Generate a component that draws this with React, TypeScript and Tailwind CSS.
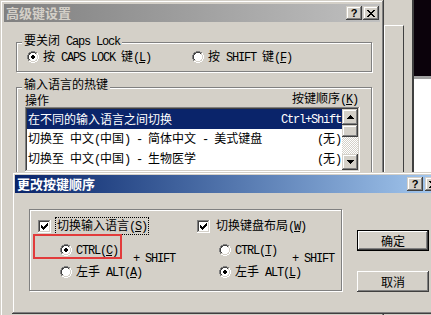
import React from "react";

const WIN =
  "bg-[#d4d0c8] shadow-[inset_-1px_-1px_#404040,inset_1px_1px_#d4d0c8,inset_-2px_-2px_#808080,inset_2px_2px_#ffffff]";
const BTN =
  "bg-[#d4d0c8] shadow-[inset_-1px_-1px_#404040,inset_1px_1px_#ffffff,inset_-2px_-2px_#808080,inset_2px_2px_#d4d0c8]";
const SUNKEN =
  "shadow-[inset_-1px_-1px_#ffffff,inset_1px_1px_#808080,inset_-2px_-2px_#d4d0c8,inset_2px_2px_#404040]";

function Lat({ s }: { s: string }) {
  const segs = s.split(/&(.)/);
  return (
    <span className="[font-family:'Liberation_Mono',monospace] text-[12px] tracking-[-1.2px] whitespace-pre">
      {segs.map((seg, i) =>
        i % 2 === 1 ? (
          <span key={i} className="underline underline-offset-[1px]">
            {seg}
          </span>
        ) : (
          seg
        )
      )}
    </span>
  );
}

function T({ s }: { s: string }) {
  const runs = s.match(/[\x20-\x7e]+|[^\x20-\x7e]+/g) || [];
  return (
    <>
      {runs.map((r, i) =>
        /^[\x20-\x7e]/.test(r) ? <Lat key={i} s={r} /> : <span key={i}>{r}</span>
      )}
    </>
  );
}

function Pix({ rows, color = "#000" }: { rows: string[]; color?: string }) {
  const h = rows.length;
  const w = rows[0].length;
  const rects: React.ReactNode[] = [];
  rows.forEach((r, y) =>
    r.split("").forEach((ch, x) => {
      if (ch === "#") rects.push(<rect key={`${x}-${y}`} x={x} y={y} width={1} height={1} fill={color} />);
    })
  );
  return (
    <svg width={w} height={h} shapeRendering="crispEdges" className="block shrink-0">
      {rects}
    </svg>
  );
}

const CHECK = ["......#", ".....##", "#...###", "##.###.", "#####..", ".###...", "..#...."];
const UP = ["...#...", "..###..", ".#####.", "#######"];
const DOWN = ["#######", ".#####.", "..###..", "...#..."];
const XMARK = ["##....##", ".##..##.", "..####..", "...##...", "..####..", ".##..##.", "##....##"];

function Radio({ checked }: { checked?: boolean }) {
  const rects: React.ReactNode[] = [];
  for (let y = 0; y < 12; y++)
    for (let x = 0; x < 12; x++) {
      const d = Math.hypot(x + 0.5 - 6, y + 0.5 - 6);
      let c: string | null = null;
      if (d < 6 && d >= 5) c = x + y < 11 ? "#808080" : "#ffffff";
      else if (d < 5 && d >= 4) c = x + y < 11 ? "#404040" : "#d4d0c8";
      else if (d < 4) c = checked && d < 2 ? "#000000" : "#ffffff";
      if (c) rects.push(<rect key={`${x}-${y}`} x={x} y={y} width={1} height={1} fill={c} />);
    }
  return (
    <svg width={12} height={12} shapeRendering="crispEdges" className="block shrink-0">
      {rects}
    </svg>
  );
}

function CheckBox({ checked }: { checked?: boolean }) {
  return (
    <div className={`w-[13px] h-[13px] bg-white shrink-0 flex items-center justify-center ${SUNKEN}`}>
      {checked && <Pix rows={CHECK} />}
    </div>
  );
}

function CapBtn({ children }: { children: React.ReactNode }) {
  return <div className={`w-[16px] h-[14px] flex items-center justify-center ${WIN}`}>{children}</div>;
}

function Help() {
  return (
    <span className="[font-family:'Liberation_Sans',sans-serif] font-bold text-[11px] leading-none text-black">?</span>
  );
}

function Group({
  label,
  className,
  labelClass = "-top-[10px]",
  children,
}: {
  label?: string;
  className: string;
  labelClass?: string;
  children?: React.ReactNode;
}) {
  return (
    <div className={`relative border border-[#808080] shadow-[inset_1px_1px_#ffffff,1px_1px_#ffffff] ${className}`}>
      {label && (
        <span className={`absolute left-[5px] px-[2px] bg-[#d4d0c8] whitespace-nowrap ${labelClass}`}>
          <T s={label} />
        </span>
      )}
      {children}
    </div>
  );
}

function RadioItem({ checked, label }: { checked?: boolean; label: string }) {
  return (
    <div className="flex items-center h-[14px] gap-[4px] whitespace-nowrap">
      <Radio checked={checked} />
      <span>
        <T s={label} />
      </span>
    </div>
  );
}

function ScrollBtn({ rows }: { rows: string[] }) {
  return (
    <div className={`h-[16px] flex items-center justify-center ${WIN}`}>
      <Pix rows={rows} />
    </div>
  );
}

function ListRow({ left, right, selected }: { left: string; right: string; selected?: boolean }) {
  return (
    <div
      className={`h-[20px] flex items-center justify-between pl-[1px] pr-[1px] whitespace-nowrap ${
        selected ? "bg-[#0a246a] text-white" : "text-black"
      }`}
    >
      <span>
        <T s={left} />
      </span>
      <span>
        <T s={right} />
      </span>
    </div>
  );
}

function PushBtn({ label, def }: { label: string; def?: boolean }) {
  return (
    <div className={`w-[72px] h-[21px] ${def ? "border border-black" : ""}`}>
      <div className={`w-full h-full flex items-center justify-center ${BTN}`}>{label}</div>
    </div>
  );
}

function KeyColumn({
  boxLabel,
  focus,
  r1,
  r2,
  r1checked,
  className,
}: {
  boxLabel: string;
  focus?: boolean;
  r1: string;
  r2: string;
  r1checked?: boolean;
  className: string;
}) {
  return (
    <div className={`flex flex-col ${className}`}>
      <div className="flex items-center h-[14px]">
        <CheckBox checked />
        <span
          className={`ml-[4px] px-[1px] border border-dotted whitespace-nowrap ${
            focus ? "border-black" : "border-transparent"
          }`}
        >
          <T s={boxLabel} />
        </span>
      </div>
      <div className="flex pl-[22px] mt-[10px]">
        <div className="w-[73px] flex flex-col gap-[8px]">
          <RadioItem checked={r1checked} label={r1} />
          <RadioItem checked={!r1checked} label={r2} />
        </div>
        <div className="mt-[7px] whitespace-nowrap">
          <Lat s="+ SHIFT" />
        </div>
      </div>
    </div>
  );
}

export default function App() {
  return (
    <div className="relative w-[431px] h-[315px] overflow-hidden bg-[#d4d0c8] [font-family:'Noto_Sans_CJK_SC',sans-serif] text-[12px] leading-[14px] text-black">
      {/* windows behind, to the right */}
      <div className="absolute left-[384px] top-[25px] w-[20px] h-[160px] border-l border-t border-white border-r border-r-[#404040]" />
      <div className="absolute left-[412px] top-0 w-[19px] h-[180px] border-l-2 border-[#404040] flex flex-col">
        <div className="h-[76px] bg-[#0b020b]" />
        <div className="h-[3px] bg-[#a0a0a0]" />
        <div className="flex-1 bg-white" />
      </div>

      {/* 高级键设置 dialog */}
      <div className={`absolute left-0 top-0 w-[384px] h-[330px] p-[4px] flex flex-col ${WIN}`}>
        <div className="h-[18px] bg-gradient-to-r from-[#808080] to-[#c0c0c0] flex items-center pl-[2px] pr-[1px]">
          <span className="text-[#d4d0c8] font-bold text-[13px]">高级键设置</span>
          <div className="ml-auto flex gap-[1px]">
            <CapBtn>
              <Help />
            </CapBtn>
            <CapBtn>
              <Pix rows={XMARK} />
            </CapBtn>
          </div>
        </div>
        <div className="flex flex-col pl-[12px] pt-[20px]">
          <Group label="要关闭 Caps Lock" className="w-[356px] h-[30px]">
            <div className="flex items-center mt-[7px] pl-[10px]">
              <div className="w-[165px]">
                <RadioItem checked label="按 CAPS LOCK 键(&L)" />
              </div>
              <RadioItem label="按 SHIFT 键(&F)" />
            </div>
          </Group>
          <Group label="输入语言的热键" labelClass="-top-[11px]" className="w-[356px] h-[110px] mt-[15px]">
            <div className="ml-[8px] mt-[4px] w-[335px] flex flex-col">
              <div className="h-[15px] flex justify-between items-end pr-[2px]">
                <span>操作</span>
                <span>
                  <T s="按键顺序(&K)" />
                </span>
              </div>
              <div className={`h-[65px] bg-white p-[2px] flex ${SUNKEN}`}>
                <div className="flex-1 flex flex-col">
                  <ListRow selected left="在不同的输入语言之间切换" right="Ctrl+Shift" />
                  <ListRow left="切换至 中文(中国) - 简体中文 - 美式键盘" right="(无)" />
                  <ListRow left="切换至 中文(中国) - 生物医学" right="(无)" />
                </div>
                <div className="w-[16px] flex flex-col">
                  <ScrollBtn rows={UP} />
                  <div className={`h-[12px] ${WIN}`} />
                  <div className="flex-1 bg-[repeating-conic-gradient(#ffffff_0_25%,#d4d0c8_0_50%)] bg-[length:2px_2px]" />
                  <ScrollBtn rows={DOWN} />
                </div>
              </div>
            </div>
          </Group>
        </div>
      </div>

      {/* 更改按键顺序 dialog */}
      <div className={`absolute left-[12px] top-[172px] w-[434px] h-[142px] p-[3px] flex flex-col ${WIN}`}>
        <div className="h-[18px] bg-gradient-to-r from-[#0a246a] to-[#a6caf0] flex items-center pl-[2px] pr-[2px]">
          <span className="text-white font-bold text-[13px]">更改按键顺序</span>
          <div className="ml-auto flex gap-[2px]">
            <CapBtn>
              <Help />
            </CapBtn>
            <CapBtn>
              <Pix rows={XMARK} />
            </CapBtn>
          </div>
        </div>
        <div className="flex pl-[14px] pt-[16px]">
          <Group className="w-[313px] h-[82px]">
            <div className="flex pl-[8px] pt-[9px]">
              <KeyColumn
                className="w-[159px]"
                focus
                boxLabel="切换输入语言(&S)"
                r1="CTRL(&C)"
                r2="左手 ALT(&A)"
                r1checked
              />
              <KeyColumn className="" boxLabel="切换键盘布局(&W)" r1="CTRL(&T)" r2="左手 ALT(&L)" />
            </div>
            <div className="absolute left-[3px] top-[24px] w-[89px] h-[25px] border-2 border-[#e23b3b]" />
          </Group>
          <div className="flex flex-col ml-[15px] mt-[21px] gap-[20px]">
            <PushBtn def label="确定" />
            <PushBtn label="取消" />
          </div>
        </div>
      </div>
    </div>
  );
}
